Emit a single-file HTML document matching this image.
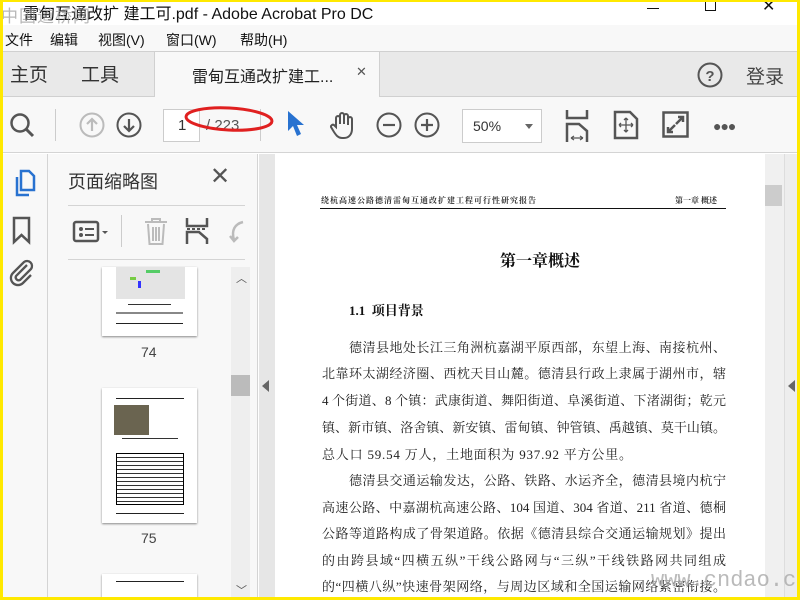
<!DOCTYPE html>
<html><head><meta charset="utf-8"><style>
*{margin:0;padding:0;box-sizing:border-box}
body{width:800px;height:600px;overflow:hidden;background:#ffe900;position:relative;font-family:"Liberation Sans","Noto Sans CJK SC",sans-serif}
.a{position:absolute}
#win{left:3px;top:2px;width:794px;height:595px;background:#fff;overflow:hidden}
.cn{font-family:"Liberation Sans","Noto Sans CJK SC",sans-serif}
.sf{font-family:"Liberation Serif","Noto Serif CJK SC",serif}
.ln{position:absolute;left:319px;width:404px;font-size:13px;color:#222;text-align:justify;text-align-last:justify;white-space:nowrap;letter-spacing:0}
.m{position:absolute;top:28px;font-size:14px;color:#111;white-space:nowrap}
svg{position:absolute;overflow:visible}
</style></head><body>
<div id="win" class="a">
<!-- title bar -->
<div class="a cn" style="left:20px;top:-2px;font-size:16px;color:#111;white-space:nowrap">雷甸互通改扩 建工可.pdf - Adobe Acrobat Pro DC</div>
<div class="a cn" style="left:-2px;top:0;font-size:17px;color:#999;opacity:.7;letter-spacing:1px">中国道桥网</div>
<div class="a" style="left:644px;top:6px;width:12px;height:1px;background:#111"></div>
<div class="a" style="left:702px;top:-2px;width:11px;height:11px;border:1px solid #111"></div>
<div class="a" style="left:759px;top:-6px;font-size:16px;color:#111">✕</div>
<!-- menu -->
<div class="a" style="left:0;top:23px;width:794px;height:26px;background:#f8f8f8"></div>
<div class="m" style="left:2px">文件</div>
<div class="m" style="left:47px">编辑</div>
<div class="m" style="left:95px">视图(V)</div>
<div class="m" style="left:163px">窗口(W)</div>
<div class="m" style="left:237px">帮助(H)</div>
<!-- tabs -->
<div class="a" style="left:0;top:49px;width:794px;height:46px;background:#e9e9e9;border-top:1px solid #d0d0d0;border-bottom:1px solid #d0d0d0"></div>
<div class="a" style="left:151px;top:50px;width:226px;height:45px;background:#f8f8f8;border-left:1px solid #d0d0d0;border-right:1px solid #d0d0d0"></div>
<div class="a cn" style="left:7px;top:58px;font-size:19px;color:#333">主页</div>
<div class="a cn" style="left:78px;top:58px;font-size:19px;color:#333">工具</div>
<div class="a cn" style="left:189px;top:61px;font-size:16px;color:#222">雷甸互通改扩建工...</div>
<div class="a" style="left:353px;top:62px;font-size:13px;color:#555">✕</div>
<svg style="left:694px;top:60px" width="26" height="26"><circle cx="13" cy="13" r="11.5" fill="none" stroke="#555" stroke-width="2"/><text x="13" y="19" text-anchor="middle" font-size="15" font-weight="bold" fill="#555" font-family="Liberation Sans">?</text></svg>
<div class="a cn" style="left:743px;top:60px;font-size:19px;color:#444">登录</div>
<!-- toolbar -->
<div class="a" style="left:0;top:95px;width:794px;height:56px;background:#f8f8f8;border-bottom:1px solid #d4d4d4"></div>
<svg style="left:6px;top:110px" width="28" height="28"><circle cx="11" cy="11" r="8.5" fill="none" stroke="#555" stroke-width="2.5"/><line x1="17" y1="17" x2="24" y2="24" stroke="#555" stroke-width="3"/></svg>
<div class="a" style="left:52px;top:107px;width:1px;height:32px;background:#ccc"></div>
<svg style="left:76px;top:110px" width="26" height="26"><circle cx="13" cy="13" r="11.5" fill="none" stroke="#bbb" stroke-width="2"/><path d="M13 19V7M8 12l5-5 5 5" fill="none" stroke="#bbb" stroke-width="2.2"/></svg>
<svg style="left:113px;top:110px" width="26" height="26"><circle cx="13" cy="13" r="11.5" fill="none" stroke="#555" stroke-width="2"/><path d="M13 7v12M8 14l5 5 5-5" fill="none" stroke="#555" stroke-width="2.2"/></svg>
<div class="a" style="left:160px;top:107px;width:37px;height:33px;background:#fff;border:1px solid #ccc"></div>
<div class="a" style="left:175px;top:115px;font-size:15px;color:#333">1</div>
<div class="a" style="left:203px;top:115px;font-size:15px;color:#555">/ 223</div>
<div class="a" style="left:257px;top:107px;width:1px;height:32px;background:#ccc"></div>
<svg style="left:180px;top:99px" width="100" height="36"><ellipse cx="46" cy="18" rx="43" ry="11" fill="none" stroke="#e02020" stroke-width="3" transform="rotate(3 46 18)"/></svg>
<svg style="left:283px;top:108px" width="20" height="30"><path d="M2 1L2 21L7 16L11 26L15 24L11 15L18 15Z" fill="#2872d0"/></svg>
<svg style="left:326px;top:108px" width="30" height="30"><path d="M7 17V8a2 2 0 0 1 4 0v6V5a2 2 0 0 1 4 0v9V6a2 2 0 0 1 4 0v9V9a2 2 0 0 1 4 0v10c0 5-3 9-8 9h-2c-4 0-6-3-8-6l-3-5a2 2 0 0 1 3-2z" fill="none" stroke="#555" stroke-width="2"/></svg>
<svg style="left:373px;top:110px" width="26" height="26"><circle cx="13" cy="13" r="11.5" fill="none" stroke="#555" stroke-width="2"/><line x1="7" y1="13" x2="19" y2="13" stroke="#555" stroke-width="2.2"/></svg>
<svg style="left:411px;top:110px" width="26" height="26"><circle cx="13" cy="13" r="11.5" fill="none" stroke="#555" stroke-width="2"/><path d="M7 13h12M13 7v12" stroke="#555" stroke-width="2.2"/></svg>
<div class="a" style="left:459px;top:107px;width:80px;height:34px;background:#fff;border:1px solid #ccc"></div>
<div class="a" style="left:470px;top:116px;font-size:14px;color:#333">50%</div>
<div class="a" style="left:522px;top:122px;width:0;height:0;border-left:4px solid transparent;border-right:4px solid transparent;border-top:5px solid #666"></div>
<svg style="left:562px;top:108px" width="24" height="32"><path d="M2 0v8h20V0" fill="none" stroke="#555" stroke-width="2.5"/><path d="M2 32V14h12l8 7v11" fill="none" stroke="#555" stroke-width="2.5"/><path d="M6 28h12M6 28l3-2M6 28l3 2M18 28l-3-2M18 28l-3 2" stroke="#555" stroke-width="1.2"/></svg>
<svg style="left:610px;top:108px" width="26" height="30"><path d="M2 2h15l7 7v19H2z" fill="none" stroke="#555" stroke-width="2.5"/><path d="M13 8v14M6 15h14M13 8l-2 2M13 8l2 2M13 22l-2-2M13 22l2-2M6 15l2-2M6 15l2 2M20 15l-2-2M20 15l-2 2" stroke="#555" stroke-width="1.3" fill="none"/></svg>
<svg style="left:659px;top:109px" width="28" height="28"><rect x="1.5" y="1.5" width="24" height="24" fill="none" stroke="#555" stroke-width="2.5"/><path d="M14 13l7-7M16 6h5v5M13 14l-7 7M6 16v5h5" stroke="#555" stroke-width="2.5" fill="none"/></svg>
<div class="a" style="left:710px;top:116px;font-size:14px;color:#555;letter-spacing:-1px">●●●</div>
<!-- left rail -->
<div class="a" style="left:0;top:152px;width:45px;height:443px;background:#f8f8f8;border-right:1px solid #d4d4d4"></div>
<svg style="left:9px;top:167px" width="24" height="30"><path d="M9 2h8l5 5v14H9z" fill="none" stroke="#2872d0" stroke-width="2.5"/><path d="M5 8v18h12" fill="none" stroke="#2872d0" stroke-width="2.5"/></svg>
<svg style="left:9px;top:214px" width="20" height="28"><path d="M2 2h15v24l-7.5-7L2 26z" fill="none" stroke="#555" stroke-width="2.5"/></svg>
<svg style="left:6px;top:257px" width="26" height="26"><path d="M18 6L7 17a3 3 0 0 0 4 4l11-11a5 5 0 0 0-7-7L4 14a7 7 0 0 0 10 10l8-8" fill="none" stroke="#555" stroke-width="2.3"/></svg>
<!-- panel -->
<div class="a" style="left:45px;top:152px;width:210px;height:443px;background:#f8f8f8;border-right:1px solid #d4d4d4"></div>
<div class="a cn" style="left:65px;top:166px;font-size:18px;color:#333">页面缩略图</div>
<div class="a" style="left:207px;top:160px;font-size:24px;color:#555">✕</div>
<div class="a" style="left:65px;top:203px;width:177px;height:1px;background:#d4d4d4"></div>
<div class="a" style="left:65px;top:257px;width:177px;height:1px;background:#d4d4d4"></div>
<svg style="left:69px;top:218px" width="40" height="24"><rect x="2" y="2" width="24" height="19" rx="2" fill="none" stroke="#555" stroke-width="2.5"/><circle cx="9" cy="9" r="2" fill="#555"/><circle cx="9" cy="15" r="2" fill="#555"/><path d="M13 9h9M13 15h9" stroke="#555" stroke-width="2"/><path d="M30 11h6l-3 3z" fill="#555"/></svg>
<div class="a" style="left:118px;top:213px;width:1px;height:32px;background:#ccc"></div>
<svg style="left:140px;top:215px" width="26" height="30"><path d="M2 5h22M9 5V2h8v3M5 7l1.5 20h13L21 7M10 10v14M13 10v14M16 10v14" fill="none" stroke="#bbb" stroke-width="2"/></svg>
<svg style="left:182px;top:216px" width="26" height="30"><path d="M2 0v8h20V0M2 26V14h12l8 7v5" fill="none" stroke="#555" stroke-width="2.5"/><path d="M2 11h20" stroke="#555" stroke-width="2" stroke-dasharray="3 2"/></svg>
<svg style="left:222px;top:218px" width="20" height="26"><path d="M18 2c-8 2-12 8-9 18M5 16l4 5 4-4" fill="none" stroke="#bbb" stroke-width="2.5"/></svg>
<!-- thumbs -->
<div class="a" style="left:99px;top:265px;width:95px;height:69px;background:#fff;box-shadow:0 1px 2px #888;overflow:hidden">
<div class="a" style="left:14px;top:0;width:69px;height:32px;background:#e4e4e4"></div>
<div class="a" style="left:36px;top:14px;width:3px;height:7px;background:#33f"></div>
<div class="a" style="left:28px;top:10px;width:6px;height:3px;background:#7c4"></div>
<div class="a" style="left:44px;top:3px;width:14px;height:3px;background:#5c6"></div>
<div class="a" style="left:26px;top:37px;width:43px;height:1px;background:#333"></div>
<div class="a" style="left:14px;top:45px;width:67px;height:2px;background:#888"></div>
<div class="a" style="left:14px;top:56px;width:67px;height:1px;background:#222"></div>
</div>
<div class="a" style="left:138px;top:342px;font-size:14px;color:#444">74</div>
<div class="a" style="left:99px;top:386px;width:95px;height:135px;background:#fff;box-shadow:0 1px 2px #888;overflow:hidden">
<div class="a" style="left:14px;top:10px;width:68px;height:1px;background:#222"></div>
<div class="a" style="left:12px;top:17px;width:35px;height:30px;background:#6a6450"></div>
<div class="a" style="left:20px;top:50px;width:56px;height:1px;background:#333"></div>
<div class="a" style="left:14px;top:65px;width:68px;height:52px;border:1px solid #000;background:repeating-linear-gradient(#fff 0 3px,#333 3px 4px)"></div>
<div class="a" style="left:14px;top:125px;width:68px;height:1px;background:#222"></div>
</div>
<div class="a" style="left:138px;top:528px;font-size:14px;color:#444">75</div>
<div class="a" style="left:99px;top:572px;width:95px;height:30px;background:#fff;box-shadow:0 1px 2px #888"><div class="a" style="left:14px;top:7px;width:68px;height:1px;background:#222"></div></div>
<div class="a" style="left:228px;top:265px;width:19px;height:330px;background:#eee"></div>
<div class="a" style="left:228px;top:373px;width:19px;height:21px;background:#bbb"></div>
<div class="a" style="left:233px;top:268px;font-size:11px;color:#555">︿</div>
<div class="a" style="left:233px;top:580px;font-size:11px;color:#555">﹀</div>
<!-- gutter -->
<div class="a" style="left:256px;top:152px;width:16px;height:443px;background:#e6e6e6"></div>
<div class="a" style="left:259px;top:378px;width:0;height:0;border-top:6px solid transparent;border-bottom:6px solid transparent;border-right:7px solid #666"></div>
<!-- right -->
<div class="a" style="left:762px;top:152px;width:32px;height:443px;background:#ededed"></div>
<div class="a" style="left:762px;top:152px;width:20px;height:443px;background:#f0f0f0;border-right:1px solid #ddd"></div>
<div class="a" style="left:762px;top:183px;width:17px;height:21px;background:#ccc"></div>
<div class="a" style="left:785px;top:378px;width:0;height:0;border-top:6px solid transparent;border-bottom:6px solid transparent;border-right:7px solid #666"></div>
<!-- page -->
<div class="a sf" style="left:318px;top:193px;font-size:8px;color:#333;letter-spacing:1px;white-space:nowrap;font-weight:bold">绕杭高速公路德清雷甸互通改扩建工程可行性研究报告</div>
<div class="a sf" style="left:672px;top:193px;font-size:8px;color:#333;white-space:nowrap;font-weight:bold">第一章 概述</div>
<div class="a" style="left:317px;top:206px;width:406px;height:1px;background:#111"></div>
<div class="a sf" style="left:497px;top:246px;font-size:16px;font-weight:bold;color:#111">第一章概述</div>
<div class="a sf" style="left:346px;top:298px;font-size:13px;font-weight:bold;color:#111">1.1&nbsp; 项目背景</div>
<div class="ln sf" style="left:346px;width:377px;top:335px">德清县地处长江三角洲杭嘉湖平原西部，东望上海、南接杭州、</div>
<div class="ln sf" style="top:361px">北靠环太湖经济圈、西枕天目山麓。德清县行政上隶属于湖州市，辖</div>
<div class="ln sf" style="top:388px">4 个街道、8 个镇：武康街道、舞阳街道、阜溪街道、下渚湖街；乾元</div>
<div class="ln sf" style="top:415px">镇、新市镇、洛舍镇、新安镇、雷甸镇、钟管镇、禹越镇、莫干山镇。</div>
<div class="ln sf" style="top:442px;text-align-last:left;letter-spacing:0.8px">总人口 59.54 万人，土地面积为 937.92 平方公里。</div>
<div class="ln sf" style="left:346px;width:377px;top:468px">德清县交通运输发达，公路、铁路、水运齐全，德清县境内杭宁</div>
<div class="ln sf" style="top:495px">高速公路、中嘉湖杭高速公路、104 国道、304 省道、211 省道、德桐</div>
<div class="ln sf" style="top:521px">公路等道路构成了骨架道路。依据《德清县综合交通运输规划》提出</div>
<div class="ln sf" style="top:548px">的由跨县域“四横五纵”干线公路网与“三纵”干线铁路网共同组成</div>
<div class="ln sf" style="top:574px">的“四横八纵”快速骨架网络，与周边区域和全国运输网络紧密衔接。</div>
<div class="a" style="left:648px;top:566px;font-size:22px;color:#aaa;opacity:.8;font-family:'Liberation Mono',monospace">www.cndao.com</div>
</div>
</body></html>
